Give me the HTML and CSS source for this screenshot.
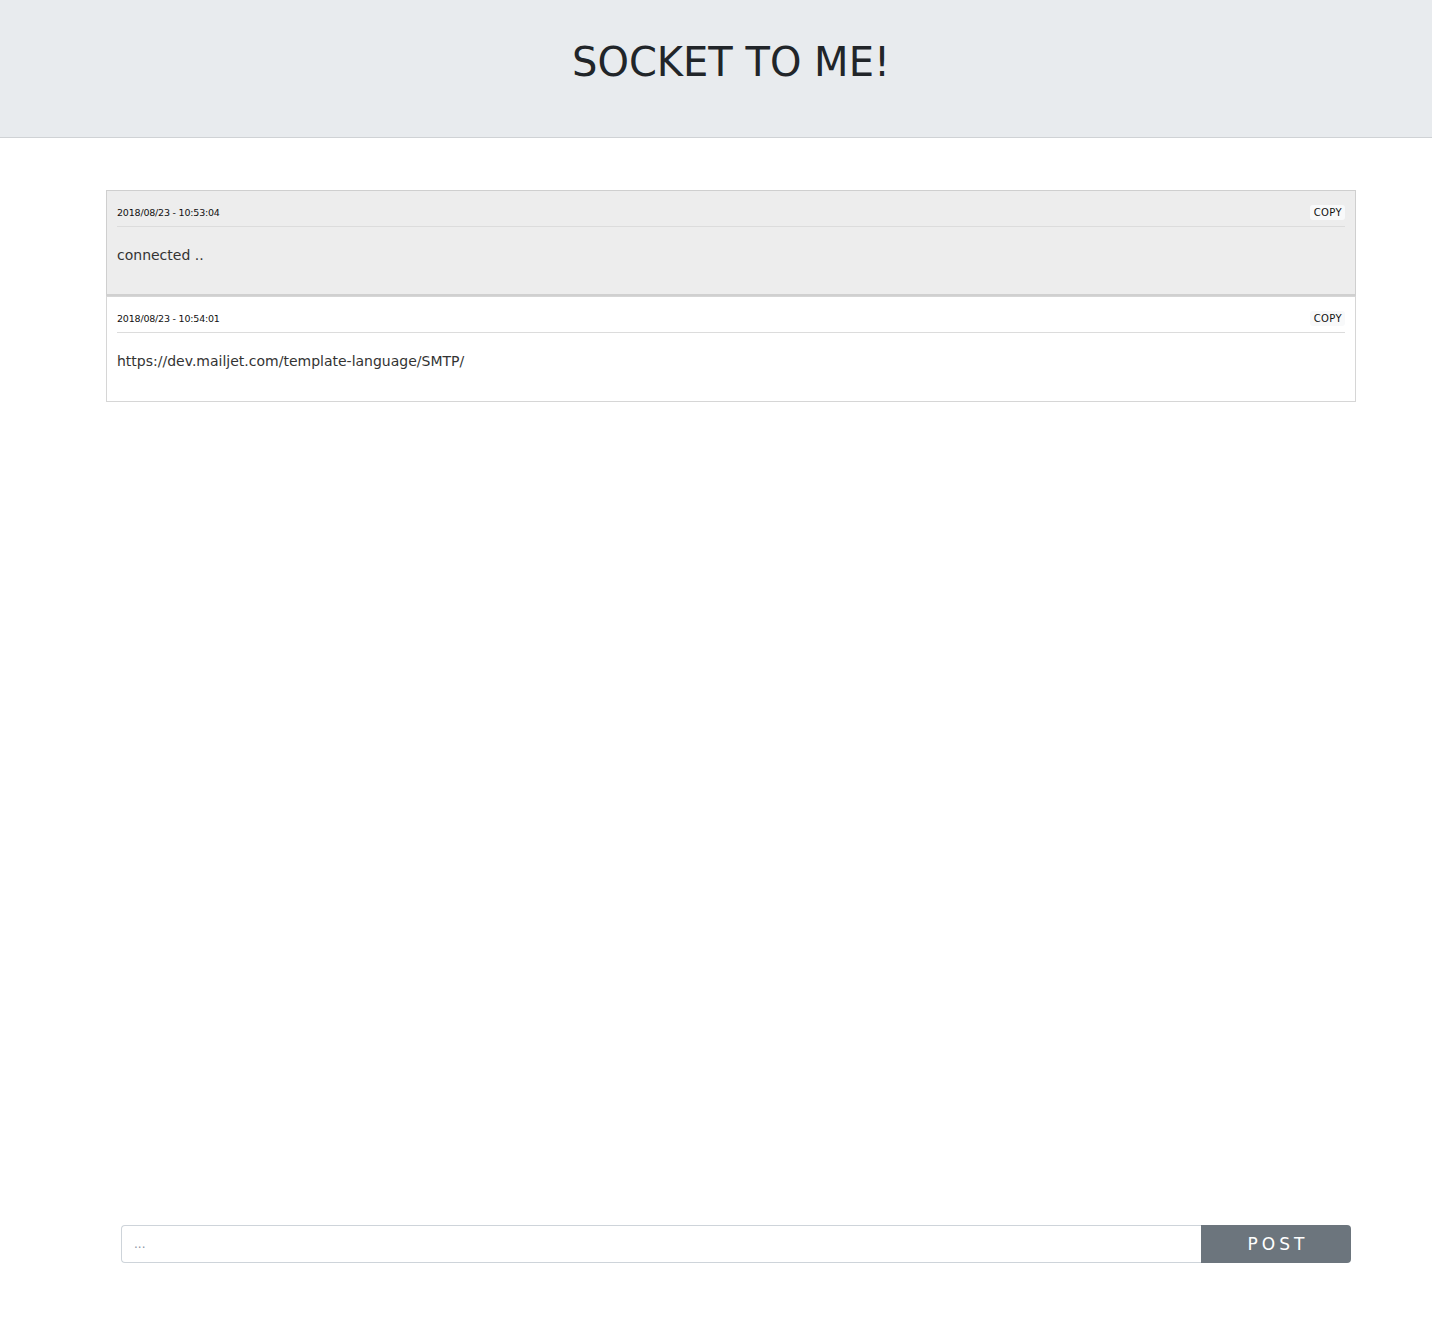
FILE: index.html
```html
<!DOCTYPE html>
<html>
<head>
<meta charset="utf-8">
<title>Socket to me!</title>
<link rel="stylesheet" href="styles.css">
</head>
<body>
<header class="top">
  <h1 class="title">SOCKET TO ME!</h1>
</header>
<main class="feed">
  <div class="msg msg-first">
    <div class="msg-head">
      <span class="stamp">2018/08/23 - 10:53:04</span>
      <button class="copy">COPY</button>
    </div>
    <div class="msg-body">connected ..</div>
  </div>
  <div class="msg">
    <div class="msg-head">
      <span class="stamp">2018/08/23 - 10:54:01</span>
      <button class="copy">COPY</button>
    </div>
    <div class="msg-body">https://dev.mailjet.com/template-language/SMTP/</div>
  </div>
</main>
<form class="composer">
  <input class="field" type="text" placeholder="...">
  <button class="post" type="button">POST</button>
</form>
</body>
</html>
```
FILE: styles.css
```css
* { box-sizing: border-box; }
html, body { margin: 0; padding: 0; }
body {
  font-family: "DejaVu Sans", "Open Sans", sans-serif;
  color: #212529;
  background: #fff;
  min-height: 1322px;
  display: flex;
  flex-direction: column;
}
.top {
  background: #e8ebee;
  border-bottom: 1px solid #cfd2d5;
  height: 138px;
  display: flex;
  align-items: center;
  justify-content: center;
  padding-left: 30px;
}
.title {
  margin: 0;
  font-weight: 400;
  font-size: 40px;
  color: #212529;
  padding-bottom: 14px;
}
.feed {
  margin: 52px 76px 0 106px;
  flex: 1;
}
.msg {
  border: 1px solid #d6d6d6;
  background: #fff;
  padding: 0 10px;
  height: 106px;
}
.msg-first {
  background: #ededed;
  border-color: #cfcfcf;
  border-bottom: 2px solid #d0d0d0;
}
.msg-head {
  display: flex;
  justify-content: space-between;
  align-items: center;
  height: 36px;
  border-bottom: 1px solid #dcdcdc;
  padding-top: 7px;
}
.stamp {
  font-size: 9.5px;
  font-weight: 500;
  color: #111;
  letter-spacing: -0.2px;
}
.copy {
  font-family: inherit;
  font-size: 10px;
  letter-spacing: 0.4px;
  color: #111;
  background: #f8f9fa;
  border: 0;
  border-radius: 3px;
  padding: 2px 3px 2px 4px;
  margin-right: 0;
}
.msg-body {
  font-size: 14px;
  color: #333;
  padding-top: 20px;
}
.composer {
  display: flex;
  margin: 0 81px 59px 121px;
  height: 38px;
}
.field {
  flex: 1;
  border: 1px solid #ced4da;
  border-right: 0;
  border-radius: 4px 0 0 4px;
  padding: 0 12px;
  font-family: inherit;
  font-size: 12px;
  color: #495057;
  outline: none;
}
.field::placeholder { color: #8b96a3; }
.post {
  width: 150px;
  border: 0;
  background: #6c757d;
  color: #fff;
  font-family: inherit;
  font-size: 17px;
  letter-spacing: 4px;
  border-radius: 0 4px 4px 0;
  padding: 0 0 0 4px;
}
```
